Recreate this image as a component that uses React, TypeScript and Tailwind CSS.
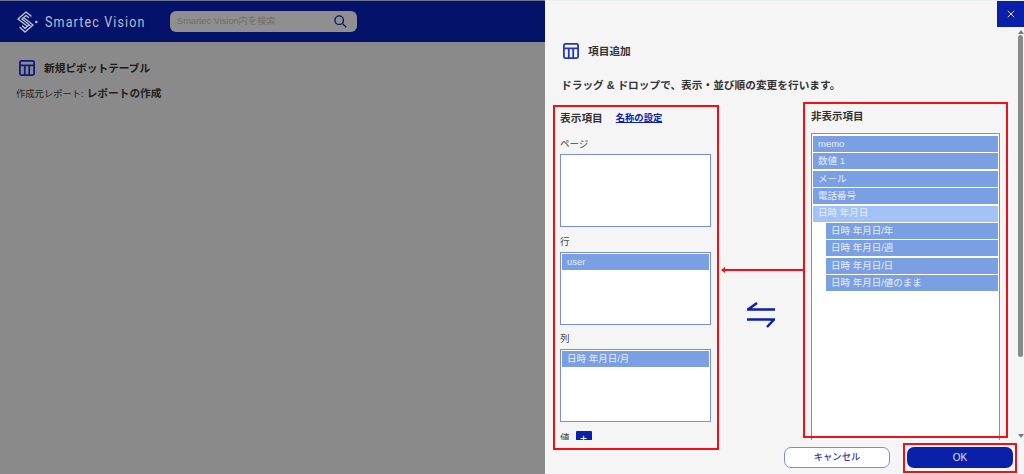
const jp = "font-['Liberation_Sans','Noto_Sans_CJK_JP',sans-serif]";

function TableIcon({ className }: { className: string }) {
  return (
    <svg viewBox="0 0 16 16" className={className} fill="none" stroke="currentColor" strokeWidth="1.8">
      <rect x="0.9" y="0.9" width="14.2" height="14.2" rx="1.5" />
      <path d="M1 5.4H15M5.8 5.4V15M10.2 5.4V15" />
    </svg>
  );
}

function Logo() {
  return (
    <svg viewBox="0 0 22 22" className="h-[22px] w-[22px]" fill="none" stroke="#b9bdd0" strokeWidth="1.5" strokeLinejoin="round" strokeLinecap="round">
      <path d="M15 5 10 1 2 8l9 7" />
      <path d="M12.5 6.5 10 4.5 6 8l8 6.5" />
      <path d="M4 16.5 9 21l8-7-9-7" />
      <path d="M6.5 15 9 17.5l3.5-3.2" />
      <circle cx="20.3" cy="11" r="1.3" fill="#b9bdd0" stroke="none" />
    </svg>
  );
}

function Field({ label, children, className = "" }: { label: string; children?: React.ReactNode; className?: string }) {
  return (
    <div className={className}>
      <div className="mb-[3px] text-[9.5px] leading-[14px] text-[#444]">{label}</div>
      <div className="h-[73px] border border-[#7c8cdc] bg-white p-[1px]">{children}</div>
    </div>
  );
}

function Item({ children, child, light }: { children: React.ReactNode; child?: boolean; light?: boolean }) {
  return (
    <div
      className={`flex h-[16px] items-center pl-[5px] text-[9.5px] text-[#e6edfa] ${child ? "ml-[13px]" : ""} ${
        light ? "bg-[#a3c2f5]" : "bg-[#7aa0e3]"
      }`}
    >
      {children}
    </div>
  );
}

export default function App() {
  return (
    <div className={`relative flex h-[474px] w-[1024px] overflow-hidden bg-[#8a8a8a] ${jp}`}>
      {/* page behind the overlay */}
      <div className="w-[545px] shrink-0">
        <header className="flex h-[42px] items-center border-t border-[#6f7590] bg-[#04126a] pl-[16px]">
          <Logo />
          <div className="ml-[7px] w-[125px]">
            <span className="inline-block origin-left scale-x-[0.83] font-['Roboto',sans-serif] text-[15px] tracking-[1.4px] whitespace-nowrap text-[#b9bdd0]">Smartec Vision</span>
          </div>
          <div className="flex h-[21px] w-[187px] items-center justify-between rounded-[6px] bg-[#8f8f8f] pl-[7px] pr-[10px]">
            <span className="text-[9.2px] text-[#6e6e6e]">Smartec Vision内を検索</span>
            <svg viewBox="0 0 14 14" className="h-[13px] w-[13px]" fill="none" stroke="#04126a" strokeWidth="1.4">
              <circle cx="5.6" cy="5.6" r="4.6" />
              <path d="M9 9l4.2 4.2" />
            </svg>
          </div>
        </header>
        <div className="pl-[16px] pt-[18px]">
          <div className="flex items-center pl-[3px]">
            <TableIcon className="h-[16px] w-[16px] text-[#0d1c80]" />
            <span className="ml-[9px] text-[10.7px] font-bold text-[#1a1a1a]">新規ピボットテーブル</span>
          </div>
          <div className="mt-[9px] flex items-baseline text-[#222]">
            <span className="text-[9.3px]">作成元レポート:</span>
            <span className="ml-[3px] text-[10.7px] font-bold">レポートの作成</span>
          </div>
        </div>
      </div>

      {/* side panel */}
      <div className="flex flex-1 flex-col border-t border-[#e8eeee] bg-[#f5f5f5]">
        <div className="flex h-[26px] justify-end">
          <button className="flex w-[27px] items-center justify-center bg-[#0a20a8]">
            <svg viewBox="0 0 10 10" className="h-[8px] w-[8px]" stroke="#fff" strokeWidth="1.1">
              <path d="M1 1l8 8M9 1l-8 8" />
            </svg>
          </button>
        </div>

        <div className="flex h-[413px]">
          <div className="flex-1 overflow-hidden pl-[15px] pr-[10px] pt-[16px]">
            <div className="flex items-center pl-[3px]">
              <TableIcon className="h-[16px] w-[16px] text-[#2438b8]" />
              <span className="ml-[9px] text-[10.7px] font-bold text-[#333]">項目追加</span>
            </div>
            <p className="mt-[18px] pl-[1px] text-[10.7px] font-bold leading-[16px] text-[#333]">ドラッグ & ドロップで、表示・並び順の変更を行います。</p>

            <div className="mt-[12px] flex items-start">
              <div className="w-[151px] pt-[6px]">
                <div className="flex items-center leading-[14px]">
                  <span className="text-[10.7px] font-bold text-[#333]">表示項目</span>
                  <a className="ml-[13px] text-[9.3px] font-bold text-[#0a20a8] underline">名称の設定</a>
                </div>
                <Field label="ページ" className="mt-[12px]" />
                <Field label="行" className="mt-[8px]">
                  <Item>user</Item>
                </Field>
                <Field label="列" className="mt-[7px]">
                  <Item>日時 年月日/月</Item>
                </Field>
                <div className="mt-[9px] flex items-start">
                  <span className="text-[9.5px] leading-[14px] text-[#444]">値</span>
                  <span className="ml-[6px] flex h-[16px] w-[16px] items-center justify-center rounded-[1px] bg-[#0a20a8] text-[12px] leading-none text-white">+</span>
                </div>
              </div>

              <div className="flex w-[100px] justify-center pt-[197px]">
                <svg viewBox="0 0 28 26" className="h-[26px] w-[28px]" fill="none" stroke="#0a20a8" strokeWidth="2.5">
                  <path d="M0 7.5H28M1 7.5 10 1" />
                  <path d="M28 17.5H0M27 17.5 20 25" />
                </svg>
              </div>

              <div className="w-[189px] pt-[4px]">
                <div className="text-[10.5px] font-bold leading-[14px] text-[#333]">非表示項目</div>
                <div className="mt-[10px] h-[400px] border border-[#7c8cdc] bg-white px-[1px] pt-[2px]">
                  <div className="flex flex-col gap-[1.4px]">
                    <Item>memo</Item>
                    <Item>数値 1</Item>
                    <Item>メール</Item>
                    <Item>電話番号</Item>
                    <Item light>日時 年月日</Item>
                    <Item child>日時 年月日/年</Item>
                    <Item child>日時 年月日/週</Item>
                    <Item child>日時 年月日/日</Item>
                    <Item child>日時 年月日/値のまま</Item>
                  </div>
                </div>
              </div>
            </div>
          </div>

          {/* scrollbar */}
          <div className="flex w-[7px] flex-col items-center">
            <div className="mt-[3px] h-0 w-0 border-x-[3px] border-b-[4px] border-x-transparent border-b-[#777]" />
            <div className="mt-[1px] h-[322px] w-[5px] rounded-[3px] bg-[#8a8a8a]" />
            <div className="mt-auto mb-[2px] h-0 w-0 border-x-[3px] border-t-[4px] border-x-transparent border-t-[#777]" />
          </div>
        </div>

        <div className="flex flex-1 items-start justify-end pt-[7px] pr-[11px]">
          <button className="flex h-[21px] w-[106px] items-center justify-center rounded-[7px] border border-[#7c8cdc] bg-white text-[9.3px] font-medium text-[#2a3cae]">キャンセル</button>
          <button className="ml-[17px] flex h-[21px] w-[106px] items-center justify-center rounded-[7px] bg-[#0a20a8] text-[10px] text-[#dfe3f5]">OK</button>
        </div>
      </div>

      {/* red annotations on top of the screenshot */}
      <div className="absolute left-[553px] top-[105px] h-[345px] w-[166px] border-2 border-[#f50f14]" />
      <div className="absolute left-[803px] top-[102px] h-[336px] w-[205px] border-2 border-[#f50f14]" />
      <div className="absolute left-[903px] top-[443px] h-[30px] w-[114px] border-2 border-[#f50f14]" />
      <div className="absolute left-[723px] top-[269px] h-[2px] w-[81px] bg-[#f50f14]" />
      <div className="absolute left-[721px] top-[267px] h-0 w-0 border-y-[3px] border-r-[4px] border-y-transparent border-r-[#f50f14]" />
    </div>
  );
}
